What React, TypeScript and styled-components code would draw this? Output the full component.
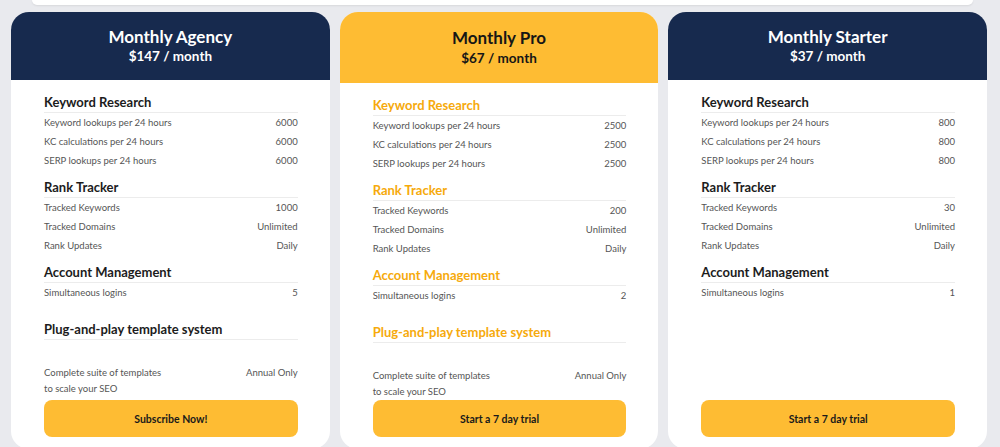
import React from "react";
import styled, { createGlobalStyle } from "styled-components";

const GlobalStyle = createGlobalStyle`
  html, body {
    margin: 0;
    padding: 0;
    overflow: hidden;
    background: #e9eaee;
    font-family: Lato, "Liberation Sans", sans-serif;
  }
  * { box-sizing: border-box; }
`;

const Page = styled.div`
  width: 1000px;
  height: 447px;
  overflow: hidden;
  background: #e9eaee;
`;

const TopBar = styled.div`
  height: 5px;
  margin: 0 27px 0 32px;
  background: #ffffff;
  border-radius: 0 0 8px 8px;
  box-shadow: 0 1px 2px rgba(0, 0, 0, 0.08);
`;

const Cards = styled.div`
  display: grid;
  grid-template-columns: repeat(3, 1fr);
  gap: 10px;
  padding: 0 13px 0 11px;
  margin-top: 7px;
  align-items: stretch;
`;

const Card = styled.div`
  display: flex;
  flex-direction: column;
  background: #ffffff;
  border-radius: 18px;
  overflow: hidden;
  padding-bottom: 12px;
`;

const Header = styled.div<{ $featured?: boolean }>`
  display: flex;
  flex-direction: column;
  align-items: center;
  background: ${(p) => (p.$featured ? "#febc33" : "#172a4e")};
  color: ${(p) => (p.$featured ? "#161616" : "#ffffff")};
  padding: ${(p) => (p.$featured ? "16px 0 16px" : "15px 0 15px")};
  gap: ${(p) => (p.$featured ? "1px" : "0")};
`;

const Title = styled.div`
  font-size: 17px;
  line-height: 20px;
  font-weight: 700;
`;

const Price = styled.div`
  font-size: 13.5px;
  line-height: 18px;
  font-weight: 700;
`;

const Body = styled.div`
  flex: 1;
  display: flex;
  flex-direction: column;
  padding: 13px 32px 0 33px;
`;

const SectionTitle = styled.div<{ $featured?: boolean; $gap?: number }>`
  margin-top: ${(p) => p.$gap ?? 0}px;
  font-size: 13px;
  line-height: 18px;
  font-weight: 700;
  color: ${(p) => (p.$featured ? "#f6aa0c" : "#1c1c1c")};
  padding-bottom: 1px;
  border-bottom: 1px solid #ececec;
`;

const Row = styled.div`
  display: flex;
  justify-content: space-between;
  align-items: center;
  height: 19px;
  font-size: 9.5px;
  color: #555555;
`;

const NoteRow = styled.div`
  display: flex;
  justify-content: space-between;
  align-items: flex-start;
  margin-top: 25px;
  font-size: 9.5px;
  line-height: 16px;
  color: #555555;
`;

const Button = styled.button`
  margin-top: auto;
  height: 37px;
  width: 100%;
  border: none;
  border-radius: 8px;
  background: #febc33;
  color: #1a1a1a;
  font-family: inherit;
  font-size: 10.5px;
  font-weight: 700;
  cursor: pointer;
`;

type Plan = {
  name: string;
  price: string;
  featured?: boolean;
  values: [string, string, string, string, string, string, string];
  templates: boolean;
  cta: string;
};

const plans: Plan[] = [
  {
    name: "Monthly Agency",
    price: "$147 / month",
    values: ["6000", "6000", "6000", "1000", "Unlimited", "Daily", "5"],
    templates: true,
    cta: "Subscribe Now!",
  },
  {
    name: "Monthly Pro",
    price: "$67 / month",
    featured: true,
    values: ["2500", "2500", "2500", "200", "Unlimited", "Daily", "2"],
    templates: true,
    cta: "Start a 7 day trial",
  },
  {
    name: "Monthly Starter",
    price: "$37 / month",
    values: ["800", "800", "800", "30", "Unlimited", "Daily", "1"],
    templates: false,
    cta: "Start a 7 day trial",
  },
];

function PlanCard({ plan }: { plan: Plan }) {
  const v = plan.values;
  const f = plan.featured;
  return (
    <Card>
      <Header $featured={f}>
        <Title>{plan.name}</Title>
        <Price>{plan.price}</Price>
      </Header>
      <Body>
        <SectionTitle $featured={f}>Keyword Research</SectionTitle>
        <Row><span>Keyword lookups per 24 hours</span><span>{v[0]}</span></Row>
        <Row><span>KC calculations per 24 hours</span><span>{v[1]}</span></Row>
        <Row><span>SERP lookups per 24 hours</span><span>{v[2]}</span></Row>

        <SectionTitle $featured={f} $gap={8}>Rank Tracker</SectionTitle>
        <Row><span>Tracked Keywords</span><span>{v[3]}</span></Row>
        <Row><span>Tracked Domains</span><span>{v[4]}</span></Row>
        <Row><span>Rank Updates</span><span>{v[5]}</span></Row>

        <SectionTitle $featured={f} $gap={8}>Account Management</SectionTitle>
        <Row><span>Simultaneous logins</span><span>{v[6]}</span></Row>

        {plan.templates && (
          <>
            <SectionTitle $featured={f} $gap={18}>Plug-and-play template system</SectionTitle>
            <NoteRow>
              <span>Complete suite of templates<br />to scale your SEO</span>
              <span>Annual Only</span>
            </NoteRow>
          </>
        )}
        <Button>{plan.cta}</Button>
      </Body>
    </Card>
  );
}

export default function App() {
  return (
    <Page>
      <GlobalStyle />
      <TopBar />
      <Cards>
        {plans.map((p) => (
          <PlanCard key={p.name} plan={p} />
        ))}
      </Cards>
    </Page>
  );
}
